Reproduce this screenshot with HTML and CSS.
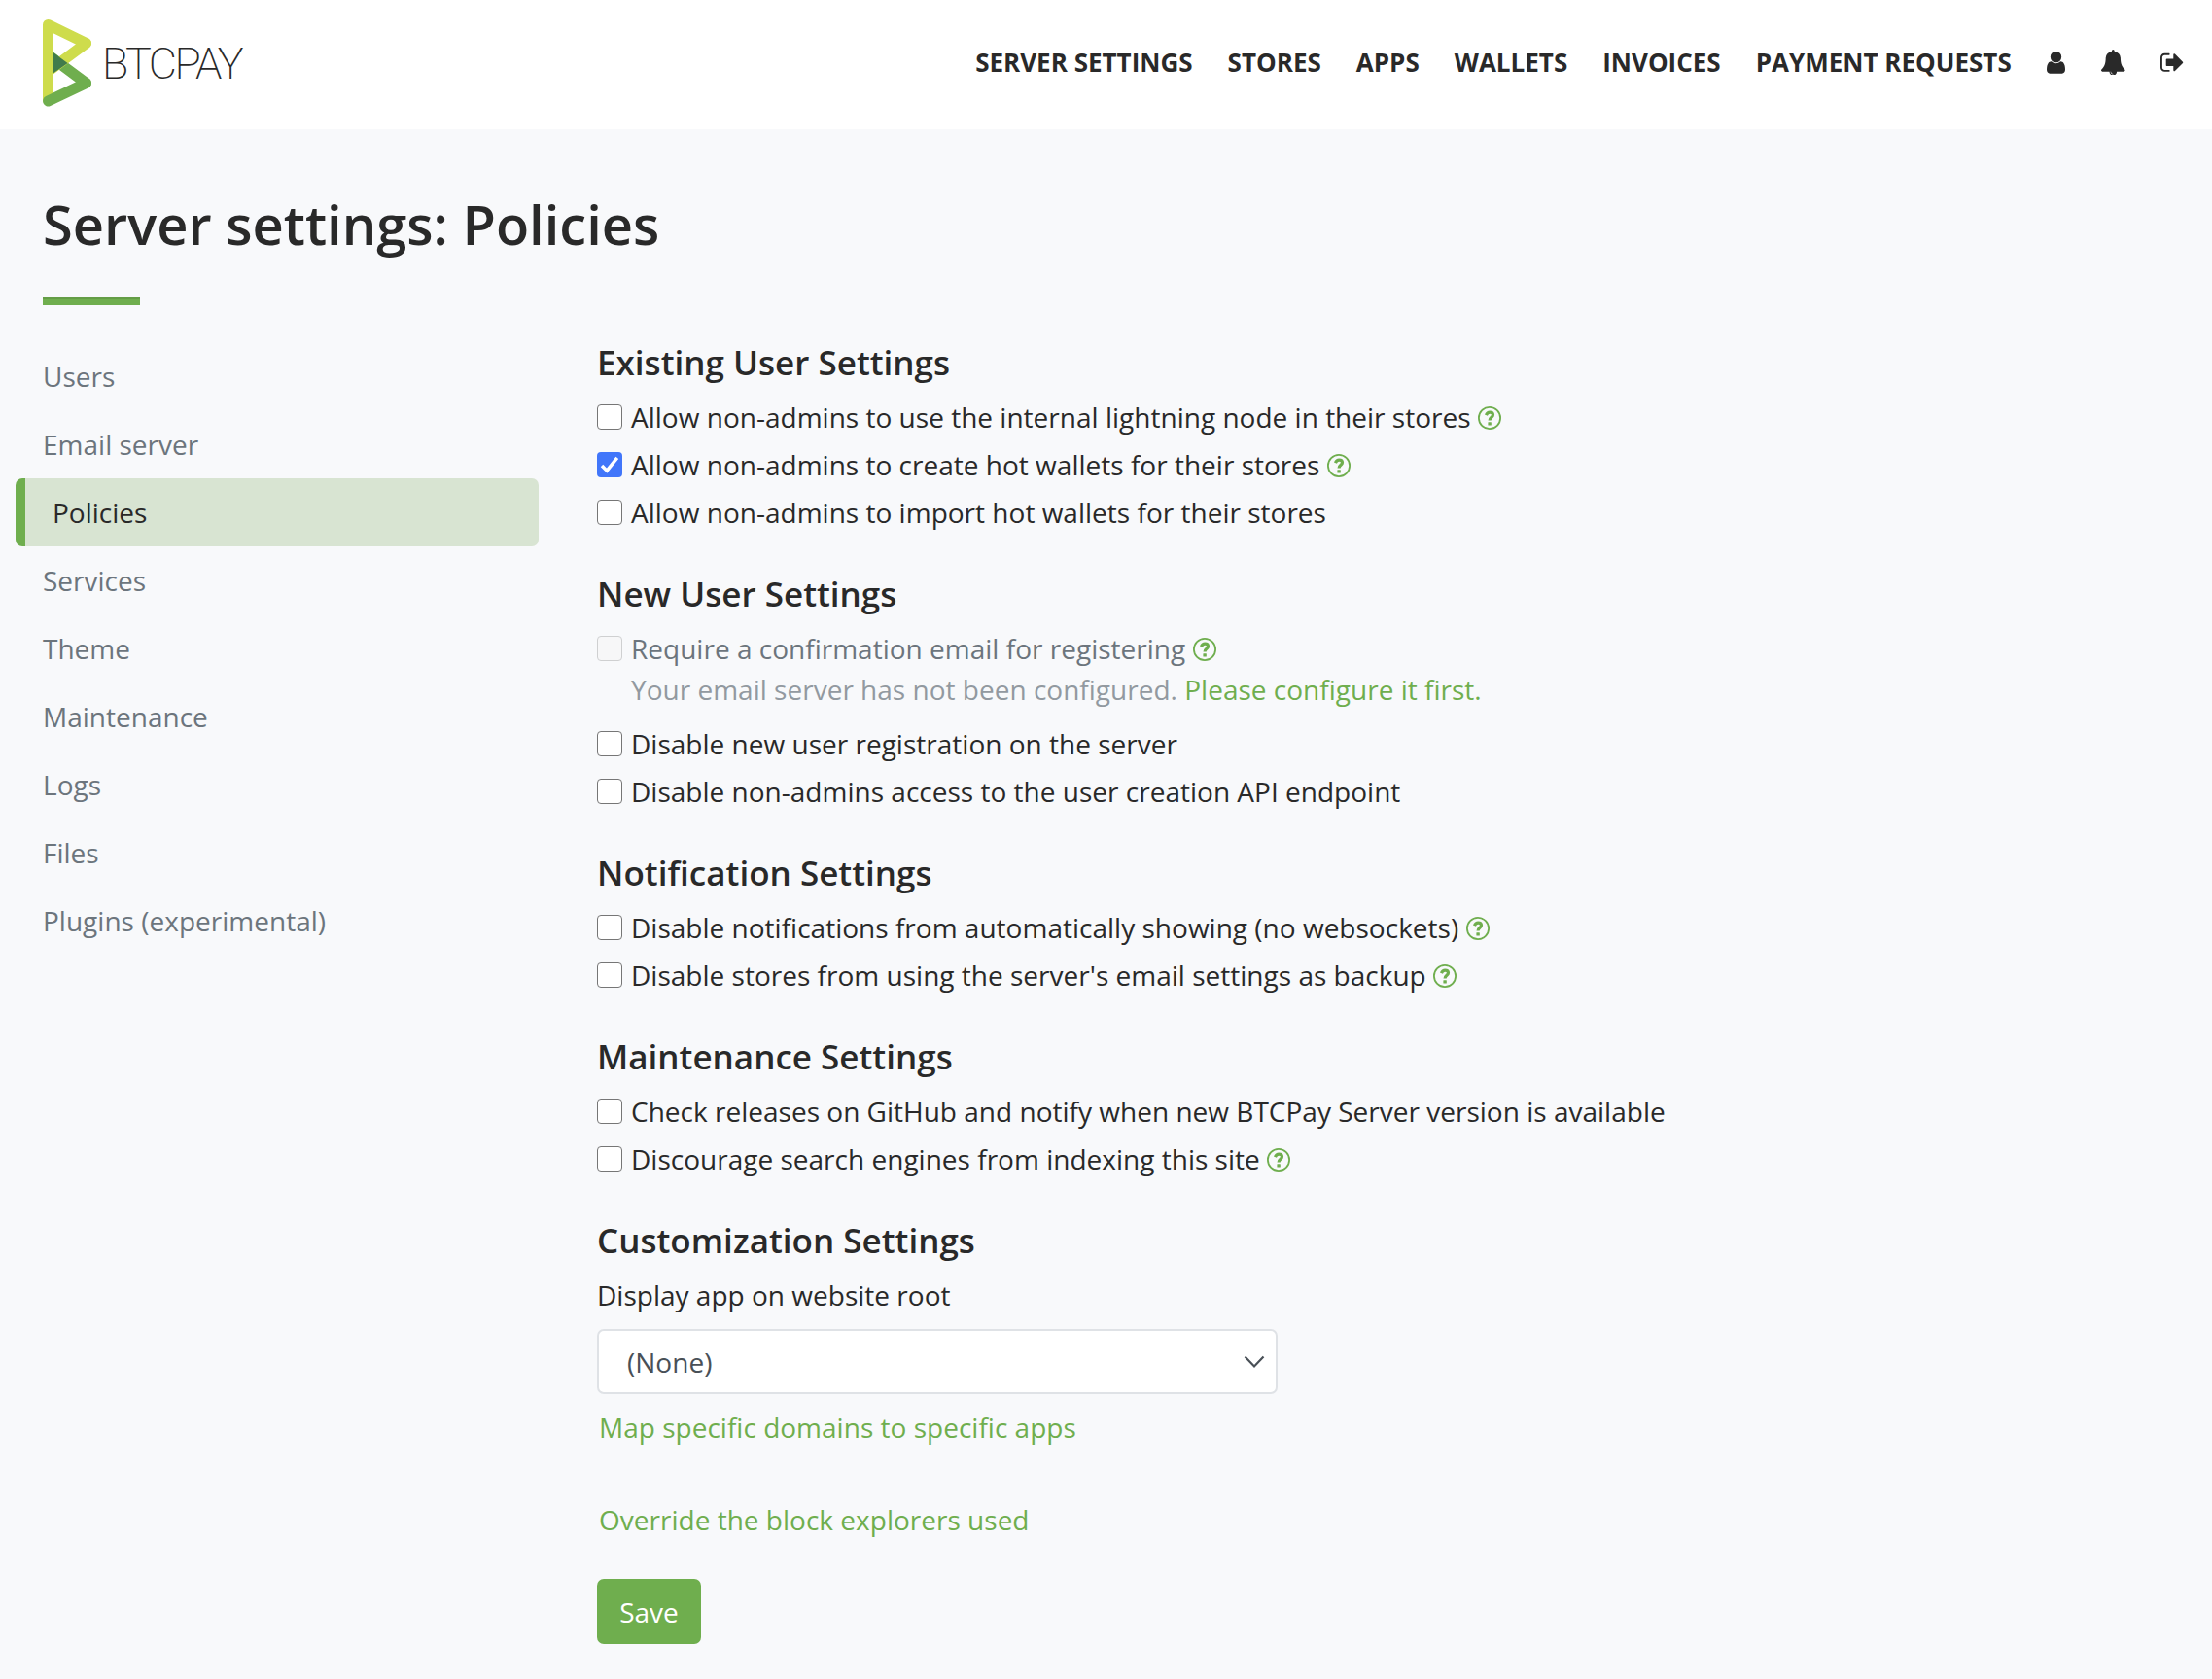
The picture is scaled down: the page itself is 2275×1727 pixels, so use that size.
FILE: index.html
```html
<!DOCTYPE html>
<html lang="en">
<head>
<meta charset="utf-8">
<title>Server settings: Policies</title>
<link rel="stylesheet" href="styles.css">
</head>
<body>
<svg class="defs" width="0" height="0" aria-hidden="true">
  <symbol id="help" viewBox="0 0 24 24">
    <circle cx="12" cy="12" r="11.1" fill="none" stroke="currentColor" stroke-width="1.8"/>
    <path d="M8.4 9.2C9.3 7.1 10.5 6.1 12.2 6.1c1.900 0 3.300 1.100 3.300 2.700 0 2.500-3.400 2.600-3.400 5.700" fill="none" stroke="currentColor" stroke-width="3.200"/>
    <rect x="10.4" y="16.2" width="3.4" height="3.4" rx=".5" fill="currentColor"/>
  </symbol>
</svg>
<header class="header">
  <a class="logo">
    <svg width="60" height="100" viewBox="40 15 60 100">
      <defs><clipPath id="right"><rect x="54" y="15" width="60" height="100"/></clipPath></defs>
      <g fill="none" stroke-width="11" stroke-linecap="round" stroke-linejoin="round">
        <g clip-path="url(#right)">
          <path d="M88.5 85.5L49.5 56.5" stroke="#6fae4e"/>
          <path d="M88.5 44.5L49.5 73.5" stroke="#cedc4c"/>
        </g>
        <path d="M54 53.5L69.6 65 54 76z" fill="#417b4b" stroke="none"/>
        <path d="M49.5 103V25.5L88.5 44.5" stroke="#cedc4c"/>
        <path d="M49.5 104L88.5 85.5" stroke="#6fae4e"/>
      </g>
    </svg>
    <span class="wordmark">BTCPAY</span>
  </a>
  <nav class="menu">
    <a>SERVER SETTINGS</a><a>STORES</a><a>APPS</a><a>WALLETS</a><a>INVOICES</a><a>PAYMENT REQUESTS</a>
    <svg class="ico ico-user" viewBox="256 0 1280 1792"><path d="M1536 1399q0 109-62.5 187t-150.5 78h-854q-88 0-150.5-78t-62.5-187q0-85 8.5-160.5t31.5-152 58.5-131 94-89 134.5-34.5q131 128 313 128t313-128q76 0 134.5 34.5t94 89 58.5 131 31.5 152 8.5 160.5zm-256-887q0 159-112.5 271.5t-271.5 112.5-271.5-112.5-112.5-271.5 112.5-271.5 271.5-112.5 271.5 112.5 112.5 271.5z"/></svg>
    <svg class="ico ico-bell" viewBox="0 0 1792 1792"><path d="M912 1696q0-16-16-16-59 0-101.5-42.5t-42.5-101.5q0-16-16-16t-16 16q0 73 51.5 124.5t124.5 51.5q16 0 16-16zm816-288q0 52-38 90t-90 38h-448q0 106-75 181t-181 75-181-75-75-181h-448q-52 0-90-38t-38-90q50-42 91-88t85-119.5 74.5-158.5 50-206 19.5-260q0-152 117-282.5t307-158.5q-8-19-8-39 0-40 28-68t68-28 68 28 28 68q0 20-8 39 190 28 307 158.5t117 282.5q0 139 19.5 260t50 206 74.5 158.5 85 119.5 91 88z"/></svg>
    <svg class="ico ico-out" viewBox="64 0 1664 1792"><path d="M704 1440q0 4 1 20t.5 26.500-3 23.500-10 19.500-20.500 6.500h-320q-119 0-203.500-84.500t-84.500-203.500v-704q0-119 84.500-203.500t203.500-84.500h320q13 0 22.500 9.500t9.500 22.500q0 4 1 20t.5 26.500-3 23.500-10 19.500-20.500 6.500h-320q-66 0-113 47t-47 113v704q0 66 47 113t113 47h312l11.500 1 11.500 3 8 5.500 7 9 2 13.500zm928-544q0 26-19 45l-544 544q-19 19-45 19t-45-19-19-45v-288h-448q-26 0-45-19t-19-45v-384q0-26 19-45t45-19h448v-288q0-26 19-45t45-19 45 19l544 544q19 19 19 45z"/></svg>
  </nav>
</header>
<main>
  <h1>Server settings: Policies</h1>
  <hr class="rule">
  <div class="columns">
    <nav class="side">
      <a>Users</a>
      <a>Email server</a>
      <a class="active">Policies</a>
      <a>Services</a>
      <a>Theme</a>
      <a>Maintenance</a>
      <a>Logs</a>
      <a>Files</a>
      <a>Plugins (experimental)</a>
    </nav>
    <form class="form">
      <section>
        <h4>Existing User Settings</h4>
        <label class="row"><i class="box"></i><span>Allow non-admins to use the internal lightning node in their stores</span><svg class="help"><use href="#help"/></svg></label>
        <label class="row"><i class="box checked"><svg viewBox="0 0 26 26"><path d="M5 14l5.200 5.200L20.800 5.800" fill="none" stroke="#fff" stroke-width="3.500"/></svg></i><span>Allow non-admins to create hot wallets for their stores</span><svg class="help"><use href="#help"/></svg></label>
        <label class="row"><i class="box"></i><span>Allow non-admins to import hot wallets for their stores</span></label>
      </section>
      <section>
        <h4>New User Settings</h4>
        <label class="row disabled"><i class="box"></i><span>Require a confirmation email for registering</span><svg class="help"><use href="#help"/></svg></label>
        <p class="hint"><span>Your email server has not been configured. <a>Please configure it first.</a></span></p>
        <label class="row"><i class="box"></i><span>Disable new user registration on the server</span></label>
        <label class="row"><i class="box"></i><span>Disable non-admins access to the user creation API endpoint</span></label>
      </section>
      <section>
        <h4>Notification Settings</h4>
        <label class="row"><i class="box"></i><span>Disable notifications from automatically showing (no websockets)</span><svg class="help"><use href="#help"/></svg></label>
        <label class="row"><i class="box"></i><span>Disable stores from using the server's email settings as backup</span><svg class="help"><use href="#help"/></svg></label>
      </section>
      <section>
        <h4>Maintenance Settings</h4>
        <label class="row"><i class="box"></i><span>Check releases on GitHub and notify when new BTCPay Server version is available</span></label>
        <label class="row"><i class="box"></i><span>Discourage search engines from indexing this site</span><svg class="help"><use href="#help"/></svg></label>
      </section>
      <section>
        <h4>Customization Settings</h4>
        <label class="label">Display app on website root</label>
        <div class="select"><span>(None)</span><svg width="22" height="14" viewBox="0 0 22 14"><path d="M1.500 1.500L11 11.500l9.500-10" fill="none" stroke="#495057" stroke-width="2.200"/></svg></div>
        <a class="link">Map specific domains to specific apps</a>
        <a class="link second">Override the block explorers used</a>
        <button type="button" class="save">Save</button>
      </section>
    </form>
  </div>
</main>
</body>
</html>
```
FILE: styles.css
```css
* { box-sizing: border-box; }
body {
  margin: 0;
  height: 1727px;
  background: #f8f9fb;
  color: #292929;
  font: 400 28px/42px "Open Sans", "Noto Sans", sans-serif;
  letter-spacing: 0.01px;
}
.defs { display: block; }
.header {
  height: 133px;
  padding: 0 28px 0 40px;
  background: #fff;
  display: flex;
  justify-content: space-between;
}
.logo { display: flex; height: 100px; margin-top: 15px; }
.logo svg { display: block; }
.wordmark {
  margin: 21px 0 0 5px;
  font: 200 45px/60px Roboto, sans-serif;
  letter-spacing: -2.6px;
}
.menu {
  display: flex;
  gap: 36px;
  height: 42px;
  margin-top: 43px;
  align-items: center;
  font-size: 26px;
  font-weight: 700;
  white-space: nowrap;
}
.ico { height: 26.6px; fill: #292929; }
.ico-user { width: 19px; }
.ico-bell { width: 26.6px; }
.ico-out { width: 24.7px; }
h1 {
  margin: 0;
  padding: 64px 44px 0;
  font-size: 56px;
  line-height: 67px;
  font-weight: 600;
}
.rule {
  width: 100px;
  height: 8px;
  margin: 42px 0 0 44px;
  border: 0;
  border-top: 2px solid #649d46;
  background: #6fae4e;
}
.columns { display: flex; }
.side {
  width: 538px;
  margin: 38px 60px 0 16px;
  display: flex;
  flex-direction: column;
}
.side a { height: 70px; padding: 14px 28px; color: #6c757d; }
.side .active {
  color: #292929;
  background: #d8e4d2;
  border-left: 10px solid #6fae4e;
  border-radius: 7px;
}
.form { margin-top: 37px; width: 1200px; }
section { margin-bottom: 41px; }
section:last-child { margin-bottom: 0; }
h4 { margin: 0 0 14px; padding-top: 1px; font-size: 35px; line-height: 42px; font-weight: 600; }
.row { display: flex; height: 42px; white-space: nowrap; }
.row + .row { margin-top: 7px; }
.box {
  width: 26px;
  height: 26px;
  margin: 8px 9px 0 0;
  border: 1px solid #767676;
  border-radius: 4px;
  background: #fff;
}
.box.checked { border: 0; background: #4176fa; }
.box svg { display: block; }
.help { width: 24px; height: 24px; margin: 10px 0 0 7.5px; color: #6fae4e; }
.disabled { color: #6c757d; }
.disabled .box { border-color: #cfd0d1; background: #f7f7f8; }
.hint { margin: 0 0 14px 35px; color: #9299a0; }
.hint a, .link { color: #6fae4e; }
.label { display: block; margin-bottom: 14px; }
.select {
  width: 700px;
  height: 67px;
  padding: 0 11px 0 29px;
  display: flex;
  align-items: center;
  justify-content: space-between;
  background: #fff;
  border: 2px solid #dfe2e6;
  border-radius: 7px;
  color: #495057;
}
.link { display: block; margin: 13px 0 0 2px; }
.second { margin-top: 53px; }
.save {
  display: block;
  width: 107px;
  height: 67px;
  margin-top: 40px;
  padding: 0;
  border: 0;
  border-radius: 7px;
  background: #6fae4e;
  color: #fff;
  font: inherit;
}
```
